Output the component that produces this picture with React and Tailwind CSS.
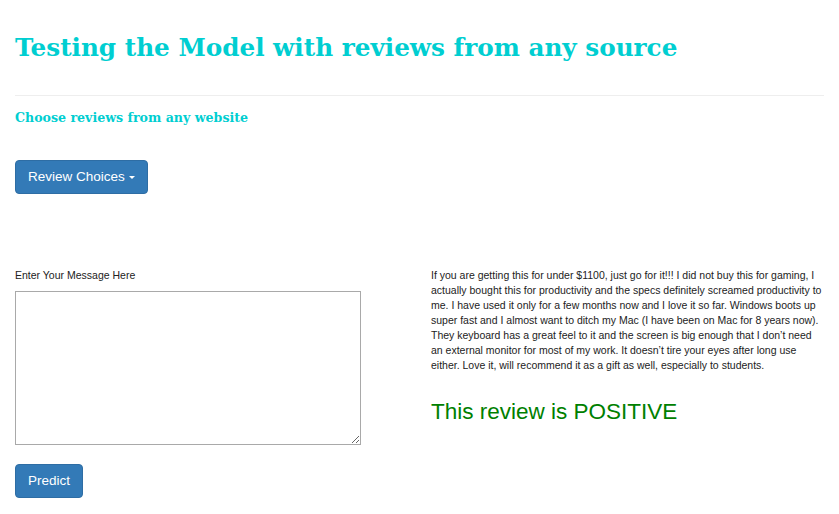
export default function App() {
  const review =
    'If you are getting this for under $1100, just go for it!!! I did not buy this for gaming, I actually bought this for productivity and the specs definitely screamed productivity to me. I have used it only for a few months now and I love it so far. Windows boots up super fast and I almost want to ditch my Mac (I have been on Mac for 8 years now). They keyboard has a great feel to it and the screen is big enough that I don\u2019t need an external monitor for most of my work. It doesn\u2019t tire your eyes after long use either. Love it, will recommend it as a gift as well, especially to students.'

  return (
    <div className="min-h-screen bg-white px-[15px] font-['Liberation_Sans',Arial,sans-serif] text-[#333]">
      <h1 className="pt-[32px] font-['DejaVu_Serif',Georgia,serif] text-[24.7px] font-bold leading-[32px] text-[#00ced1]">
        Testing the Model with reviews from any source
      </h1>
      <hr className="mt-[31px] mb-[12px] border-t border-[#eee]" />
      <h4 className="font-['DejaVu_Serif',Georgia,serif] text-[12.6px] font-bold leading-[20px] text-[#00ced1]">
        Choose reviews from any website
      </h4>

      <button className="mt-[32px] flex h-[34px] items-center gap-[4px] rounded-[4px] border border-[#2e6da4] bg-[#337ab7] px-[12px] text-[13.5px] text-white">
        Review Choices
        <span className="inline-block h-0 w-0 border-x-[3.5px] border-t-[3.5px] border-x-transparent border-t-white" />
      </button>

      <div className="mt-[74px] flex gap-[70px]">
        <div className="w-[346px] shrink-0">
          <label className="block text-[10.5px] leading-[15px] text-[#222]">Enter Your Message Here</label>
          <textarea className="mt-[8px] block h-[154px] w-[346px] border border-[#a9a9a9] bg-white" />
          <button className="mt-[19px] h-[34px] rounded-[4px] border border-[#2e6da4] bg-[#337ab7] px-[12px] text-[13.5px] text-white">
            Predict
          </button>
        </div>
        <div className="w-[394px]">
          <p className="text-[10.5px] leading-[15px] text-[#222]">{review}</p>
          <p className="mt-[26px] text-[22.5px] leading-[26px] text-[#008000]">This review is POSITIVE</p>
        </div>
      </div>
    </div>
  )
}
